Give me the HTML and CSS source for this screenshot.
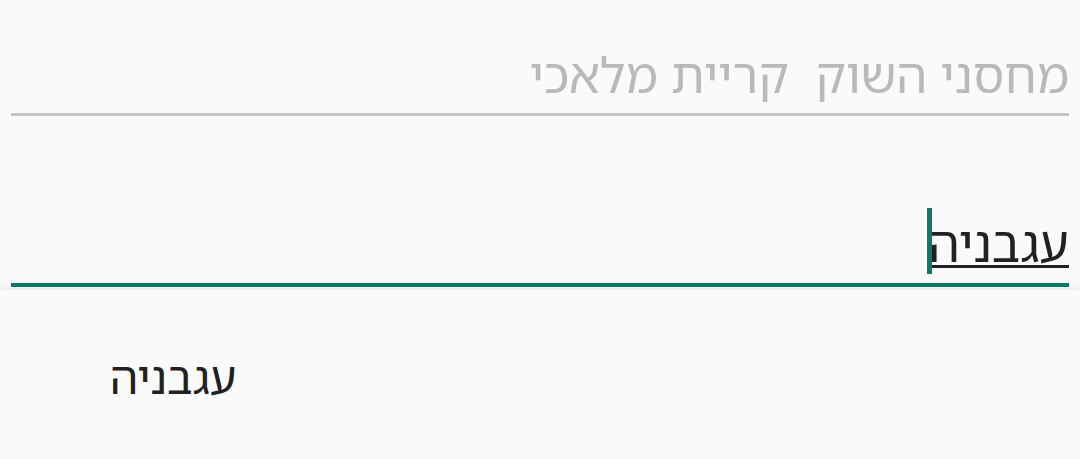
FILE: index.html
```html
<!DOCTYPE html>
<html lang="he" dir="rtl">
<head>
<meta charset="utf-8">
<link rel="stylesheet" href="styles.css">
</head>
<body>
<div class="screen">
  <div class="field field-idle">
    <div class="placeholder">מחסני השוק&nbsp; קריית מלאכי</div>
  </div>
  <div class="field field-active">
    <div class="value"><span class="caret"></span><span class="typed">עגבניה</span></div>
  </div>
  <div class="dropdown">
    <div class="option">עגבניה</div>
  </div>
</div>
</body>
</html>
```

FILE: styles.css
```css
* { box-sizing: border-box; }
html, body {
  margin: 0;
  padding: 0;
  background: #fafafa;
}
body {
  width: 1080px;
  height: 459px;
  overflow: hidden;
  font-family: "Noto Sans Hebrew", "Liberation Sans", "DejaVu Sans", sans-serif;
}
.screen {
  display: flex;
  flex-direction: column;
}
.field {
  margin: 0 11px;
}
.field-idle {
  padding-top: 41px;
  height: 116px;
  border-bottom: 3px solid #c4c4c4;
}
.placeholder {
  font-size: 49px;
  line-height: 66px;
  color: #b9b9b9;
  white-space: nowrap;
}
.field-active {
  height: 171px;
  padding-top: 92px;
  border-bottom: 4px solid #0f786c;
}
.value {
  display: flex;
  align-items: flex-start;
  justify-content: flex-start;
  direction: rtl;
}
.typed {
  font-size: 50px;
  line-height: 66px;
  padding-top: 2px;
  color: #212121;
  text-decoration: underline;
  text-decoration-thickness: 3px;
  text-underline-offset: 3px;
}
.caret {
  order: 2;
  width: 5px;
  height: 66px;
  background: #0f786c;
  margin-right: -3px;
}
.dropdown {
  margin-top: 3px;
  height: 170px;
  background: #fafafa;
  box-shadow: 0 -3px 6px rgba(0,0,0,0.06);
  direction: ltr;
  padding-top: 57px;
  padding-left: 110px;
}
.option {
  direction: rtl;
  display: inline-block;
  font-size: 45px;
  line-height: 60px;
  color: #212121;
}
```
